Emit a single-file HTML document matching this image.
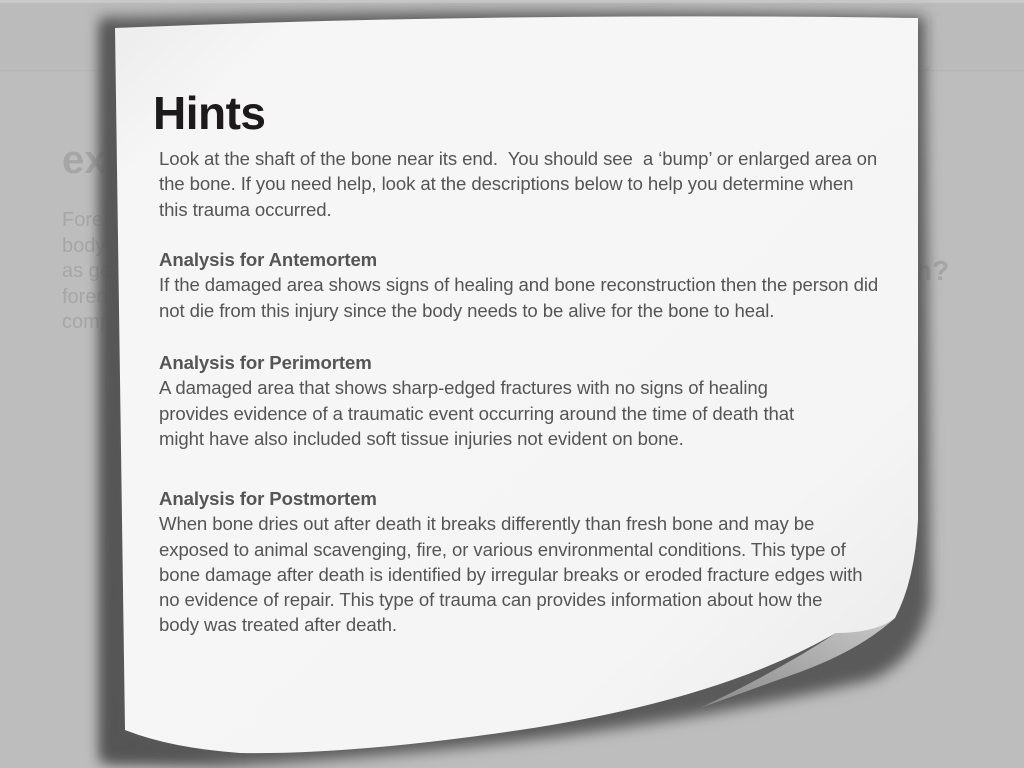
<!DOCTYPE html>
<html><head><meta charset="utf-8"><style>
html,body{margin:0;padding:0;width:1024px;height:768px;overflow:hidden;background:#bdbdbd;font-family:"Liberation Sans",sans-serif}
.band{position:absolute;left:0;top:0;width:1024px;height:70px;background:#bbb;border-top:3px solid #c9c9c9;box-sizing:border-box;box-shadow:0 1px 1px #b3b3b3}
.tab{position:absolute;left:765px;top:12px;width:165px;height:58px;border-radius:8px;background:#bfbfbf;box-shadow:0 1px 2px #b0b0b0}
.bg{position:absolute;color:#a6a6a6}
svg{position:absolute;left:0;top:0}
.t{position:absolute;left:159px;color:#555;font-size:18.6px;line-height:25.3px;white-space:nowrap;letter-spacing:-0.1px}
.h{font-weight:bold;color:#555}
h1{position:absolute;left:153px;top:86px;margin:0;font-size:46px;font-weight:bold;color:#1c1a1b;letter-spacing:-0.5px}
</style></head><body>
<div class="band"></div><div class="tab"></div>
<div class="bg" style="left:62px;top:138px;font-size:40px;font-weight:bold">exa</div>
<div class="bg" style="left:62px;top:208px;font-size:20px;line-height:25.5px">Foren<br>body<br>as ge<br>foren<br>comp</div>
<div class="bg" style="left:915px;top:255px;font-size:28px;font-weight:bold">n?</div>
<svg width="1024" height="768" viewBox="0 0 1024 768">
<defs>
<filter id="b" x="-10%" y="-10%" width="120%" height="120%"><feGaussianBlur stdDeviation="7"/></filter>
<linearGradient id="g" x1="0" y1="0" x2="1" y2="1">
<stop offset="0" stop-color="#ececec"/><stop offset="0.12" stop-color="#f6f6f6"/><stop offset="0.75" stop-color="#f5f5f5"/><stop offset="1" stop-color="#e8e8e8"/></linearGradient>
<linearGradient id="c" x1="0" y1="1" x2="1" y2="0">
<stop offset="0" stop-color="#8a8a8a"/><stop offset="1" stop-color="#c8c8c8"/></linearGradient>
</defs>
<path d="M100,18 Q500,8 925,16 L930,600 Q920,660 870,680 Q600,745 240,765 L100,762 Z" fill="#5a5a5a" filter="url(#b)"/>
<path d="M104,22 Q110,25 115,28 L125,730 L240,760 L104,760 Z" fill="#555" filter="url(#b)"/>
<path d="M836,633 Q870,632 895,618 Q860,650 800,672 Q750,690 700,708 Q780,670 836,633 Z" fill="url(#c)"/>
<path d="M115,28 Q500,12 918,18 L918,520 Q915,580 895,618 Q875,633 836,633 Q720,700 520,730 Q350,755 240,753 Q170,748 125,730 Z" fill="url(#g)"/>
</svg>
<h1>Hints</h1>
<div class="t" style="top:146px">Look at the shaft of the bone near its end.&nbsp; You should see&nbsp; a ‘bump’ or enlarged area on<br>the bone. If you need help, look at the descriptions below to help you determine when<br>this trauma occurred.</div>
<div class="t" style="top:247px"><span class="h">Analysis for Antemortem</span><br>If the damaged area shows signs of healing and bone reconstruction then the person did<br>not die from this injury since the body needs to be alive for the bone to heal.</div>
<div class="t" style="top:350px"><span class="h">Analysis for Perimortem</span><br>A damaged area that shows sharp-edged fractures with no signs of healing<br>provides evidence of a traumatic event occurring around the time of death that<br>might have also included soft tissue injuries not evident on bone.</div>
<div class="t" style="top:486px"><span class="h">Analysis for Postmortem</span><br>When bone dries out after death it breaks differently than fresh bone and may be<br>exposed to animal scavenging, fire, or various environmental conditions. This type of<br>bone damage after death is identified by irregular breaks or eroded fracture edges with<br>no evidence of repair. This type of trauma can provides information about how the<br>body was treated after death.</div>
</body></html>
